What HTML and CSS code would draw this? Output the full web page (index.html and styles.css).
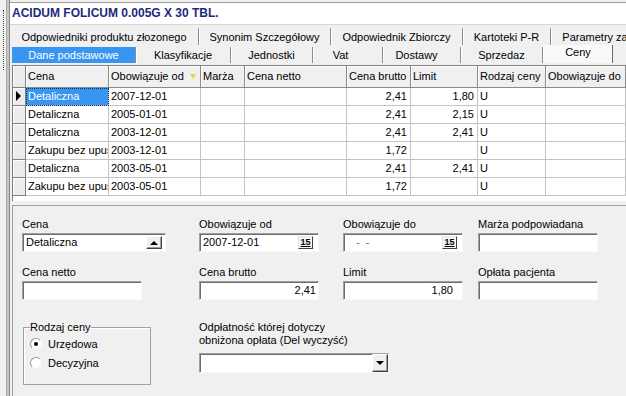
FILE: index.html
```html
<!DOCTYPE html>
<html lang="pl">
<head>
<meta charset="utf-8">
<title>Ceny</title>
<link rel="stylesheet" href="styles.css">
</head>
<body>
<div class="window">
  <div class="gutter"><div class="dots"></div></div>
  <div class="edge"></div>
  <div class="main">
    <div class="title">ACIDUM FOLICUM 0.005G X 30 TBL.</div>
    <div class="tabrow row1">
      <div class="tab t-odp">Odpowiedniki produktu złozonego</div>
      <div class="tab t-syn">Synonim Szczegółowy</div>
      <div class="tab t-zb">Odpowiednik Zbiorczy</div>
      <div class="tab t-kart">Kartoteki P-R</div>
      <div class="tab t-par">Parametry zamienników</div>
    </div>
    <div class="tabrow row2">
      <div class="tab t-dane hl">Dane podstawowe</div>
      <div class="tab t-klas">Klasyfikacje</div>
      <div class="tab t-jedn">Jednostki</div>
      <div class="tab t-vat">Vat</div>
      <div class="tab t-dost">Dostawy</div>
      <div class="tab t-sprz">Sprzedaz</div>
      <div class="tab t-ceny active">Ceny</div>
      <div class="tab t-more"></div>
    </div>
    <div class="grid">
      <table class="tbl">
        <colgroup>
          <col class="c-ind"><col class="c-cena"><col class="c-od"><col class="c-marza"><col class="c-netto"><col class="c-brutto"><col class="c-limit"><col class="c-rodz"><col class="c-do">
        </colgroup>
        <thead>
          <tr><th class="ind"></th><th>Cena</th><th>Obowiązuje od<span class="sort"></span></th><th>Marża</th><th>Cena netto</th><th>Cena brutto</th><th>Limit</th><th>Rodzaj ceny</th><th>Obowiązuje do</th></tr>
        </thead>
        <tbody>
          <tr><td class="ind"><span class="arrow"></span></td><td class="sel">Detaliczna</td><td>2007-12-01</td><td></td><td></td><td class="num">2,41</td><td class="num">1,80</td><td>U</td><td></td></tr>
          <tr><td class="ind"></td><td>Detaliczna</td><td>2005-01-01</td><td></td><td></td><td class="num">2,41</td><td class="num">2,15</td><td>U</td><td></td></tr>
          <tr><td class="ind"></td><td>Detaliczna</td><td>2003-12-01</td><td></td><td></td><td class="num">2,41</td><td class="num">2,41</td><td>U</td><td></td></tr>
          <tr><td class="ind"></td><td>Zakupu bez upustu</td><td>2003-12-01</td><td></td><td></td><td class="num">1,72</td><td class="num"></td><td>U</td><td></td></tr>
          <tr><td class="ind"></td><td>Detaliczna</td><td>2003-05-01</td><td></td><td></td><td class="num">2,41</td><td class="num">2,41</td><td>U</td><td></td></tr>
          <tr><td class="ind"></td><td>Zakupu bez upustu</td><td>2003-05-01</td><td></td><td></td><td class="num">1,72</td><td class="num"></td><td>U</td><td></td></tr>
        </tbody>
      </table>
    </div>
    <div class="form">
      <div class="field">
        <label>Cena</label>
        <div class="box wide split"><span>Detaliczna</span><span class="btn"><span class="tri-up"></span></span></div>
      </div>
      <div class="field">
        <label>Obowiązuje od</label>
        <div class="box split"><span>2007-12-01</span><span class="cal">15</span></div>
      </div>
      <div class="field">
        <label>Obowiązuje do</label>
        <div class="box split"><span class="empty-date">-  -</span><span class="cal">15</span></div>
      </div>
      <div class="field">
        <label>Marża podpowiadana</label>
        <div class="box"></div>
      </div>

      <div class="field">
        <label>Cena netto</label>
        <div class="box"></div>
      </div>
      <div class="field">
        <label>Cena brutto</label>
        <div class="box num">2,41</div>
      </div>
      <div class="field">
        <label>Limit</label>
        <div class="box num limit">1,80</div>
      </div>
      <div class="field">
        <label>Opłata pacjenta</label>
        <div class="box"></div>
      </div>

      <fieldset class="group r3">
        <legend>Rodzaj ceny</legend>
        <div class="opt"><span class="radio"><span class="dot"></span></span><span>Urzędowa</span></div>
        <div class="opt"><span class="radio"></span><span>Decyzyjna</span></div>
      </fieldset>
      <div class="field odpl r3">
        <label class="two">Odpłatność której dotyczy<br>obniżona opłata (Del wyczyść)</label>
        <div class="box dd"><span class="ddbtn"><span class="tri-down"></span></span></div>
      </div>
    </div>
  </div>
</div>
</body>
</html>
```
FILE: styles.css
```css
* { box-sizing: border-box; }
html, body { margin: 0; padding: 0; }
body {
  width: 626px;
  height: 396px;
  overflow: hidden;
  background: #f0f0f0;
  font-family: "Liberation Sans", Arial, sans-serif;
  font-size: 11px;
  color: #000;
}
.window { display: flex; height: 396px; }
.gutter { width: 6px; flex: none; }
.dots { margin: 10px 0 0 3px; height: 60px; border-left: 1px dotted #404040; }
.edge {
  width: 4px; flex: none;
  background: #c4c4c4;
  border-left: 1px solid #a8a8a8;
  border-right: 1px solid #8a8a8a;
}
.main { flex: 1; min-width: 0; overflow: hidden; display: flex; flex-direction: column; }

.title {
  margin-top: 2px;
  border-top: 1px solid #a0a0a0;
  height: 22px;
  line-height: 21px;
  background: #fff;
  padding-left: 2px;
  font-weight: bold;
  font-size: 12px;
  color: #1e2a7a;
  white-space: nowrap;
}

.tabrow { display: flex; white-space: nowrap; flex: none; }
.tab { flex: none; text-align: center; overflow: hidden; }
.row1 { border-top: 1px solid #d4d4d4; height: 22px; align-items: flex-start; }
.row1 .tab {
  margin-top: 3px; height: 17px; line-height: 15px; padding-top: 2px;
  border-right: 1px solid #8c8c8c; box-shadow: 1px 0 0 #fff;
}
.t-odp { width: 189px; }
.t-syn { width: 132px; }
.t-zb { width: 132px; }
.t-kart { width: 88px; }
.t-par { width: 141px; }

.row2 { height: 17px; padding-left: 2px; align-items: flex-start; }
.row2 .tab {
  margin-top: 1px; height: 16px; line-height: 16px;
  border-right: 1px solid #8c8c8c; box-shadow: 1px 0 0 #fff;
}
.row2 .hl { background: #3895f0; color: #fff; }
.row2 .active {
  margin-top: -1px; height: 18px; line-height: 14px;
  background: #f9f9f9;
  border-left: 1px solid #fff;
  border-right: 1px solid #696969;
  box-shadow: none;
}
.t-dane { width: 124px; }
.t-klas { width: 95px; }
.t-jedn { width: 82px; }
.t-vat { width: 70px; padding-right: 14px; }
.t-dost { width: 78px; padding-right: 10px; }
.t-sprz { width: 82px; }
.t-ceny { width: 70px; }
.t-more { width: 60px; }

.grid {
  flex: none;
  margin: 2px 0 0 2px;
  height: 136px;
  background: #fff;
  border-top: 1px solid #7f7f7f;
  border-left: 1px solid #7f7f7f;
  overflow: hidden;
}
.tbl { border-collapse: separate; border-spacing: 0; table-layout: fixed; width: 613px; }
.c-ind { width: 13px; }
.c-cena { width: 83px; }
.c-od { width: 92px; }
.c-marza { width: 44px; }
.c-netto { width: 102px; }
.c-brutto { width: 64px; }
.c-limit { width: 67px; }
.c-rodz { width: 68px; }
.c-do { width: 80px; }
.tbl th, .tbl td {
  padding: 0 2px;
  overflow: hidden;
  white-space: nowrap;
  text-overflow: clip;
  text-align: left;
  font-weight: normal;
}
.tbl th {
  line-height: 21px;
  background: #f0f0f0;
  border-right: 1px solid #8a8a8a;
  border-bottom: 1px solid #8a8a8a;
  box-shadow: inset 1px 1px 0 #fff;
}
.tbl td {
  line-height: 17px;
  border-right: 1px solid #c4c4c4;
  border-bottom: 1px solid #c4c4c4;
}
.tbl .ind {
  padding: 0;
  background: #ececec;
  border-right: 1px solid #808080;
  border-bottom: 1px solid #808080;
  box-shadow: inset 1px 1px 0 #fff;
}
.tbl td.num { text-align: right; padding-right: 3px; }
.tbl td.sel {
  background: #3895f0;
  color: #fff;
  outline: 1px dotted #12305a;
  outline-offset: -1px;
}
.sort {
  float: right;
  margin: 8px 2px 0 0;
  border-left: 3px solid transparent;
  border-right: 3px solid transparent;
  border-top: 5px solid #e4d64c;
}
.arrow {
  display: inline-block;
  vertical-align: middle;
  margin: -2px 0 0 3px;
  border-left: 5px solid #000;
  border-top: 5px solid transparent;
  border-bottom: 5px solid transparent;
}

.form {
  flex: 1;
  margin: 4px 0 0 2px;
  border-top: 1px solid #a0a0a0;
  border-left: 1px solid #a0a0a0;
  padding: 11px 0 0 9px;
  display: grid;
  grid-template-columns: 177px 144px 135px 120px;
  row-gap: 13px;
  align-content: start;
  align-items: start;
}
.field { display: flex; flex-direction: column; align-items: flex-start; }
.field label { line-height: 15px; height: 15px; margin-bottom: 1px; white-space: nowrap; }
.field label.two { line-height: 13px; height: 26px; margin-bottom: 6px; }
.r3 { margin-top: 8px; }
.odpl { grid-column: 2 / span 2; }

.box {
  height: 19px;
  width: 120px;
  background: #fff;
  border: 1px solid;
  border-color: #a0a0a0 #f8f8f8 #f8f8f8 #a0a0a0;
  box-shadow: inset 1px 1px 0 #6e6e6e;
  line-height: 17px;
  padding: 0 2px 0 3px;
  display: flex;
  align-items: center;
  white-space: nowrap;
}
.box.wide { width: 144px; }
.box.split { justify-content: space-between; }
.box.num { justify-content: flex-end; }
.box.limit { padding-right: 9px; }
.btn {
  width: 16px; height: 13px; margin-right: 1px;
  background: #f0f0f0;
  border: 1px solid;
  border-color: #fff #404040 #404040 #fff;
  box-shadow: inset -1px -1px 0 #a0a0a0;
  display: flex; align-items: center; justify-content: center;
}
.tri-up { border-left: 4px solid transparent; border-right: 4px solid transparent; border-bottom: 4px solid #000; }
.tri-down { border-left: 4px solid transparent; border-right: 4px solid transparent; border-top: 4px solid #000; }
.cal {
  width: 15px; height: 13px; margin-right: 3px;
  border: 1px solid;
  border-color: #e4e4e4 #404040 #404040 #e4e4e4;
  background: #f4f4f4;
  font-size: 9px; font-weight: bold; line-height: 11px;
  text-align: center; text-decoration: underline;
}
.empty-date { white-space: pre; color: #707070; padding-left: 9px; }
.box.dd { width: 190px; height: 20px; padding: 0; justify-content: flex-end; }
.ddbtn {
  width: 16px; height: 18px;
  background: #f0f0f0;
  border: 1px solid;
  border-color: #fff #404040 #404040 #fff;
  box-shadow: inset -1px -1px 0 #a0a0a0;
  display: flex; align-items: center; justify-content: center;
}

.group {
  margin: 8px 0 0 1px;
  width: 128px;
  padding: 0 0 12px 6px;
  border: 1px solid #a0a0a0;
  box-shadow: inset 1px 1px 0 #fff;
  min-width: 0;
}
.group legend { padding: 0; margin: 0; line-height: 13px; }
.opt { display: flex; align-items: center; height: 19px; gap: 6px; }
.radio {
  width: 12px; height: 12px;
  border-radius: 50%;
  background: #fff;
  border: 1px solid;
  border-color: #9a9a9a #f4f4f4 #f4f4f4 #9a9a9a;
  display: flex; align-items: center; justify-content: center;
}
.dot { width: 4px; height: 4px; border-radius: 50%; background: #000; }
```
